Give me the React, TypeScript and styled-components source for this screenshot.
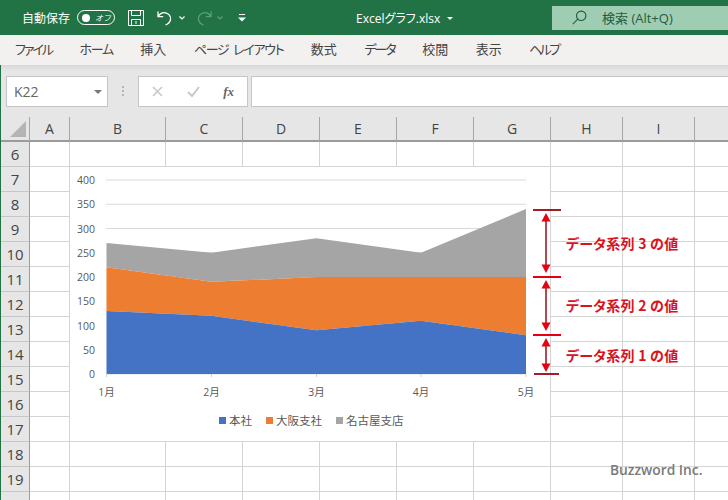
import React from 'react'
import styled, { createGlobalStyle } from 'styled-components'

const UI_FONT = '"Noto Sans CJK JP", "Noto Sans", sans-serif'
const COLS = ['A', 'B', 'C', 'D', 'E', 'F', 'G', 'H', 'I', '']
const ROWS = [6, 7, 8, 9, 10, 11, 12, 13, 14, 15, 16, 17, 18, 19, 20]
const TABS = [
  { name: 'ファイル', spacing: -2 },
  { name: 'ホーム', spacing: -1.3 },
  { name: '挿入', spacing: 0 },
  { name: 'ページ レイアウト', spacing: -1.3 },
  { name: '数式', spacing: 0 },
  { name: 'データ', spacing: -2 },
  { name: '校閲', spacing: 0 },
  { name: '表示', spacing: 0 },
  { name: 'ヘルプ', spacing: -2.6 },
]

const GlobalStyle = createGlobalStyle`
  html, body { margin: 0; padding: 0; background: #fff; }
  body { width: 728px; height: 500px; overflow: hidden; font-family: ${UI_FONT}; }
`

const Page = styled.div`
  position: relative;
  width: 728px;
  height: 500px;
  overflow: hidden;
`

const TitleBar = styled.div`
  height: 35px;
  background: #217346;
  color: #fff;
  display: flex;
  align-items: center;
  padding-left: 22px;
  box-sizing: border-box;
`

const AutoSave = styled.span`
  font-size: 12px;
  width: 55px;
  font-feature-settings: 'palt';
`

const Toggle = styled.div`
  width: 38px;
  height: 15px;
  box-sizing: border-box;
  border: 1px solid #fff;
  border-radius: 8px;
  display: flex;
  align-items: center;
  padding-left: 4px;
  gap: 5px;
  font-size: 8px;
  font-style: italic;
  margin-right: 13px;
  &::before {
    content: '';
    width: 8px;
    height: 8px;
    border-radius: 50%;
    background: #fff;
  }
`

const QuickIcons = styled.div`
  display: flex;
  align-items: center;
  width: 228px;
`

const Spacer = styled.span<{ $w: number }>`
  width: ${(p) => p.$w}px;
`

const FileName = styled.div`
  font-size: 12px;
  width: 196px;
  display: flex;
  align-items: center;
  gap: 7px;
  font-family: 'Open Sans', ${UI_FONT};
  font-feature-settings: 'palt';
`

const Caret = styled.span`
  width: 0;
  height: 0;
  border-left: 3px solid transparent;
  border-right: 3px solid transparent;
  border-top: 3px solid #fff;
  margin-top: 2px;
`

const SearchBox = styled.div`
  flex: 1;
  height: 24px;
  margin-top: 1px;
  padding: 0 0 1px 20px;
  box-sizing: border-box;
  background: #9fcdb3;
  color: #1f5c3b;
  display: flex;
  align-items: center;
  gap: 15px;
  font-size: 13px;
  font-family: 'Open Sans', ${UI_FONT};
`

const Ribbon = styled.div`
  height: 30px;
  background: #f3f1f0;
  display: flex;
  align-items: center;
  gap: 27.5px;
  padding: 0 0 3px 15px;
  font-size: 13px;
  color: #444;
  box-sizing: border-box;
  font-feature-settings: 'palt';
`

const Tab = styled.span<{ $spacing: number }>`
  letter-spacing: ${(p) => p.$spacing}px;
  word-spacing: 3px;
`

const FormulaArea = styled.div`
  height: 52px;
  background: linear-gradient(#d8d8d8, #e6e6e6 6px);
  display: flex;
  align-items: flex-start;
  padding: 11px 0 0 6px;
  box-sizing: border-box;
  border-left: 1px solid #217346;
`

const NameBox = styled.div`
  width: 102px;
  height: 31px;
  margin-left: -1px;
  background: #fff;
  border: 1px solid #c6c6c6;
  box-sizing: border-box;
  display: flex;
  align-items: center;
  justify-content: space-between;
  padding: 0 5px 0 7px;
  font-size: 14px;
  color: #666;
  font-family: 'Open Sans', sans-serif;
`

const DownCaret = styled.span`
  width: 0;
  height: 0;
  border-left: 4px solid transparent;
  border-right: 4px solid transparent;
  border-top: 4px solid #777;
`

const Grip = styled.div`
  width: 2px;
  height: 10px;
  margin: 10px 14px 0 14px;
  background: repeating-linear-gradient(#b5b5b5 0 2px, transparent 2px 4px);
`

const FormulaButtons = styled.div`
  width: 110px;
  height: 31px;
  background: #fff;
  border: 1px solid #c6c6c6;
  box-sizing: border-box;
  display: flex;
  align-items: center;
  justify-content: space-between;
  padding: 0 13px;
`

const FxLabel = styled.i`
  font-family: 'Liberation Serif', serif;
  font-weight: bold;
  font-size: 13px;
  color: #666;
`

const FormulaInput = styled.div`
  flex: 1;
  height: 31px;
  margin-left: 3px;
  background: #fff;
  border: 1px solid #c6c6c6;
  border-right: none;
  box-sizing: border-box;
`

const Sheet = styled.div`
  display: grid;
  grid-template-columns: 29px 40px 96px 77px 77px 77px 77px 77px 72px 72px 34px;
  grid-auto-rows: 25px;
  border-left: 1px solid #217346;
`

const Corner = styled.div`
  height: 25px;
  background: #e6e6e6;
  border-right: 1px solid #a6a6a6;
  border-bottom: 2px solid #9b9b9b;
  box-sizing: border-box;
  display: flex;
  align-items: flex-end;
  justify-content: flex-end;
  padding: 0 3px 3px 0;
  &::after {
    content: '';
    width: 0;
    height: 0;
    border-left: 16px solid transparent;
    border-bottom: 16px solid #b4b4b4;
  }
`

const ColHead = styled.div`
  height: 25px;
  background: #e6e6e6;
  border-right: 1px solid #a6a6a6;
  border-bottom: 2px solid #9b9b9b;
  box-sizing: border-box;
  display: flex;
  align-items: center;
  justify-content: center;
  font-size: 14px;
  color: #444;
  font-family: 'Open Sans', sans-serif;
`

const RowHead = styled.div`
  background: #e6e6e6;
  border-right: 1px solid #9b9b9b;
  border-bottom: 1px solid #c6c6c6;
  box-sizing: border-box;
  display: flex;
  align-items: center;
  justify-content: center;
  font-size: 15px;
  color: #444;
  font-family: 'Open Sans', sans-serif;
`

const Cell = styled.div`
  border-right: 1px solid #d4d4d4;
  border-bottom: 1px solid #d4d4d4;
  box-sizing: border-box;
`

const ChartPanel = styled.div`
  position: absolute;
  left: 70px;
  top: 167px;
  width: 480px;
  height: 274px;
  background: #fff;
  display: flex;
  flex-direction: column;
`

const Legend = styled.div`
  display: flex;
  padding-left: 149px;
  margin-top: 9px;
  gap: 14px;
  font-size: 11.5px;
  color: #595959;
`

const LegendItem = styled.div<{ $color: string }>`
  display: flex;
  align-items: center;
  gap: 3px;
  &::before {
    content: '';
    width: 7px;
    height: 7px;
    background: ${(p) => p.$color};
  }
`

const Annotations = styled.div`
  position: absolute;
  left: 533px;
  top: 209px;
  display: flex;
  flex-direction: column;
`

const Segment = styled.div<{ $h: number }>`
  height: ${(p) => p.$h}px;
  display: flex;
  align-items: center;
  gap: 5px;
`

const SegmentLabel = styled.span`
  font-size: 14px;
  font-weight: 700;
  color: #d9121c;
  white-space: nowrap;
  font-feature-settings: 'palt';
  letter-spacing: 0.25px;
  text-shadow: 0 0 2px #fff;
`

const Watermark = styled.div`
  position: absolute;
  left: 610px;
  top: 460px;
  font-family: 'Open Sans', sans-serif;
  font-size: 13.8px;
  font-weight: 600;
  color: #7a7a7a;
`

const IconSvg = styled.svg`
  display: block;
  flex-shrink: 0;
`

const Axis = styled.text`
  font-family: 'Open Sans', ${UI_FONT};
  font-size: 10.5px;
  fill: #595959;
`

const xs = [106.5, 211.5, 316.5, 421, 526]
const yOf = (v: number) => 374 - v * 0.485
const base = [130, 120, 90, 110, 80]
const mid = [220, 190, 200, 200, 200]
const top = [270, 250, 280, 250, 340]
const line = (vals: number[]) => vals.map((v, i) => `${xs[i]},${yOf(v)}`)
const band = (upper: number[], lower: number[]) => [...line(upper), ...line(lower).reverse()].join(' ')

const SaveIcon = () => (
  <IconSvg width="16" height="16" viewBox="0 0 16 16" fill="none" stroke="#fff" strokeWidth="1">
    <path d="M.5.5h15v15H.5z" />
    <path d="M3.5.5v5h9v-5M3.5 15.5v-6h9v6M8 11v3" />
  </IconSvg>
)

const UndoIcon = ({ color, flip }: { color: string; flip?: boolean }) => (
  <IconSvg
    width="16"
    height="16"
    viewBox="0 0 16 16"
    fill="none"
    stroke={color}
    strokeWidth="1.3"
    style={flip ? { transform: 'scaleX(-1)' } : undefined}
  >
    <path d="M1 1.5v5.2h5.2M1.3 6.5C3 3.5 5.5 2.2 8.5 2.8c3.5.7 5.7 3.6 5 6.8-.4 2.4-2.2 4.2-5 5.4" />
  </IconSvg>
)

const Chevron = ({ color }: { color: string }) => (
  <IconSvg width="6" height="4" viewBox="0 0 6 4" fill="none" stroke={color} strokeWidth="1.2">
    <path d="M.5.5 3 3 5.5.5" />
  </IconSvg>
)

const CustomizeIcon = () => (
  <IconSvg width="8" height="8" viewBox="0 0 8 8" fill="#fff">
    <rect x="1" y="0" width="6" height="1" />
    <path d="M0 3.5h8L4 7.5z" />
  </IconSvg>
)

const SearchIcon = () => (
  <IconSvg width="15" height="15" viewBox="0 0 15 15" fill="none" stroke="#1f5c3b" strokeWidth="1.1">
    <circle cx="9.2" cy="5.8" r="4.7" />
    <path d="M5.8 9.2.8 14.2" />
  </IconSvg>
)

const Bracket = ({ h, topColor, bottomColor }: { h: number; topColor: string; bottomColor?: string }) => (
  <IconSvg width="28" height={h} viewBox={`0 0 28 ${h}`}>
    <rect x="0" y="0" width="28" height="2" fill={topColor} />
    {bottomColor && <rect x="1" y={h - 2} width="25" height="2" fill={bottomColor} />}
    <rect x="12.2" y="8" width="1.6" height={h - 16} fill="#a51c24" />
    <path d={`M13 4 17.5 12.5H8.5Z M13 ${h - 3} 17.5 ${h - 11.5}H8.5Z`} fill="#e60012" />
  </IconSvg>
)

export default function App() {
  return (
    <Page>
      <GlobalStyle />
      <TitleBar>
        <AutoSave>自動保存</AutoSave>
        <Toggle>オフ</Toggle>
        <QuickIcons>
          <SaveIcon />
          <Spacer $w={13} />
          <UndoIcon color="#fff" />
          <Spacer $w={6} />
          <Chevron color="#fff" />
          <Spacer $w={11} />
          <UndoIcon color="#5f9c7d" flip />
          <Spacer $w={5} />
          <Chevron color="#5f9c7d" />
          <Spacer $w={15} />
          <CustomizeIcon />
        </QuickIcons>
        <FileName>
          Excelグラフ.xlsx
          <Caret />
        </FileName>
        <SearchBox>
          <SearchIcon />
          検索 (Alt+Q)
        </SearchBox>
      </TitleBar>
      <Ribbon>
        {TABS.map((t) => (
          <Tab key={t.name} $spacing={t.spacing}>
            {t.name}
          </Tab>
        ))}
      </Ribbon>
      <FormulaArea>
        <NameBox>
          K22
          <DownCaret />
        </NameBox>
        <Grip />
        <FormulaButtons>
          <IconSvg width="11" height="11" viewBox="0 0 11 11" stroke="#c8c8c8" strokeWidth="1.6">
            <path d="M1 1l9 9M10 1l-9 9" />
          </IconSvg>
          <IconSvg width="13" height="11" viewBox="0 0 13 11" fill="none" stroke="#c8c8c8" strokeWidth="2">
            <path d="M1 6l4 4 7-9" />
          </IconSvg>
          <FxLabel>fx</FxLabel>
        </FormulaButtons>
        <FormulaInput />
      </FormulaArea>
      <Sheet>
        <Corner />
        {COLS.map((c, i) => (
          <ColHead key={i}>{c}</ColHead>
        ))}
        {ROWS.map((r) => (
          <React.Fragment key={r}>
            <RowHead>{r}</RowHead>
            {COLS.map((c, i) => (
              <Cell key={i} />
            ))}
          </React.Fragment>
        ))}
      </Sheet>
      <ChartPanel>
        <IconSvg width="480" height="236" viewBox="70 167 480 236">
          {[0, 50, 100, 150, 200, 250, 300, 350, 400].map((v) => (
            <React.Fragment key={v}>
              <line x1="106" x2="526" y1={yOf(v)} y2={yOf(v)} stroke="#d9d9d9" strokeWidth="1" />
              <Axis x="95" y={yOf(v) + 4} textAnchor="end">
                {v}
              </Axis>
            </React.Fragment>
          ))}
          <polygon points={band(top, mid)} fill="#a5a5a5" />
          <polygon points={band(mid, base)} fill="#ed7d31" />
          <polygon points={band(base, [0, 0, 0, 0, 0])} fill="#4472c4" />
          {xs.map((x, i) => (
            <React.Fragment key={x}>
              <line x1={x} x2={x} y1="374" y2="377" stroke="#d0d0d0" />
              <Axis x={x} y="396" textAnchor="middle">
                {i + 1}月
              </Axis>
            </React.Fragment>
          ))}
        </IconSvg>
        <Legend>
          <LegendItem $color="#4472c4">本社</LegendItem>
          <LegendItem $color="#ed7d31">大阪支社</LegendItem>
          <LegendItem $color="#a5a5a5">名古屋支店</LegendItem>
        </Legend>
      </ChartPanel>
      <Annotations>
        <Segment $h={67}>
          <Bracket h={67} topColor="#a51c24" />
          <SegmentLabel>データ系列 3 の値</SegmentLabel>
        </Segment>
        <Segment $h={58}>
          <Bracket h={58} topColor="#e60012" />
          <SegmentLabel>データ系列 2 の値</SegmentLabel>
        </Segment>
        <Segment $h={41}>
          <Bracket h={41} topColor="#e60012" bottomColor="#a51c24" />
          <SegmentLabel>データ系列 1 の値</SegmentLabel>
        </Segment>
      </Annotations>
      <Watermark>Buzzword Inc.</Watermark>
    </Page>
  )
}
